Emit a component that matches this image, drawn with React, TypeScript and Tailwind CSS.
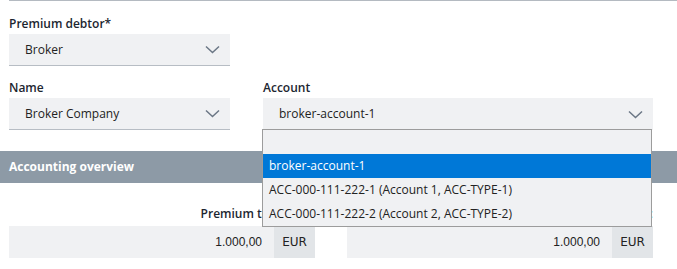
import { ReactNode } from 'react';

const Chevron = () => (
  <svg width="15" height="9" viewBox="0 0 15 9" className="shrink-0">
    <path d="M1 1.5 L7.5 7.5 L14 1.5" fill="none" stroke="#6b7785" strokeWidth="1.5" />
  </svg>
);

const Label = ({ children }: { children: ReactNode }) => (
  <div className="h-[17px] text-[12px] leading-[17px] font-semibold text-[#1c2630]">{children}</div>
);

const Select = ({ value, border = true }: { value: string; border?: boolean }) => (
  <div
    className={`flex h-[32px] items-center justify-between bg-[#f0f1f3] pl-[16px] pr-[10px] text-[12px] text-[#222] ${
      border ? 'border-b border-[#b7bdc4]' : ''
    }`}
  >
    <span>{value}</span>
    <Chevron />
  </div>
);

const Amount = ({ value }: { value: string }) => (
  <div className="flex h-[32px] w-[306px] text-[12px] text-[#222]">
    <div className="flex flex-1 items-center justify-end bg-[#f0f1f3] pr-[12px] font-['Liberation_Sans',sans-serif]">
      {value}
    </div>
    <div className="flex w-[41px] items-center justify-center bg-[#e2e5e8] font-['DejaVu_Sans',sans-serif]">EUR</div>
  </div>
);

const OPTIONS = [
  'broker-account-1',
  'ACC-000-111-222-1 (Account 1, ACC-TYPE-1)',
  'ACC-000-111-222-2 (Account 2, ACC-TYPE-2)',
];

export default function App() {
  return (
    <div className="relative h-[269px] w-[677px] overflow-hidden bg-white font-['Open_Sans',sans-serif]">
      <div className="ml-[9px] h-px bg-[#b4bac1]" />

      <div className="px-[9px] pt-[14px]">
        <Label>Premium debtor*</Label>
        <div className="mt-[2px] w-[221px]">
          <Select value="Broker" />
        </div>

        <div className="mt-[13px] grid grid-cols-[221px_390px] gap-x-[33px]">
          <Label>Name</Label>
          <Label>Account</Label>
          <div className="mt-[2px]">
            <Select value="Broker Company" />
          </div>
          <div className="relative mt-[2px]">
            <Select value="broker-account-1" border={false} />
            {/* open dropdown list */}
            <div className="absolute left-[-1px] top-[31px] z-10 w-[390px] border border-[#9c9c9c] bg-[#f0f1f3] text-[12px] text-[#222]">
              <div className="h-[24px]" />
              {OPTIONS.map((o, i) => (
                <div
                  key={o}
                  className={`flex h-[24px] items-center pl-[6px] ${i === 0 ? 'bg-[#0078d7] text-white' : ''}`}
                >
                  {o}
                </div>
              ))}
            </div>
          </div>
        </div>
      </div>

      <div className="mt-[21px] flex h-[32px] items-center bg-[#8d9aa6] px-[9px] text-[12px] font-bold text-white">
        Accounting overview
      </div>

      <div className="px-[9px] pt-[22px]">
        <div className="flex gap-[32px]">
          <div className="w-[306px] text-right text-[12px] leading-[17px] font-semibold text-[#1c2630]">
            Premium to be paid
          </div>
          <div className="w-[306px] text-right text-[12px] leading-[17px] text-[#0078d7]">Details :</div>
        </div>
        <div className="mt-[4px] flex gap-[32px]">
          <Amount value="1.000,00" />
          <Amount value="1.000,00" />
        </div>
      </div>
    </div>
  );
}
